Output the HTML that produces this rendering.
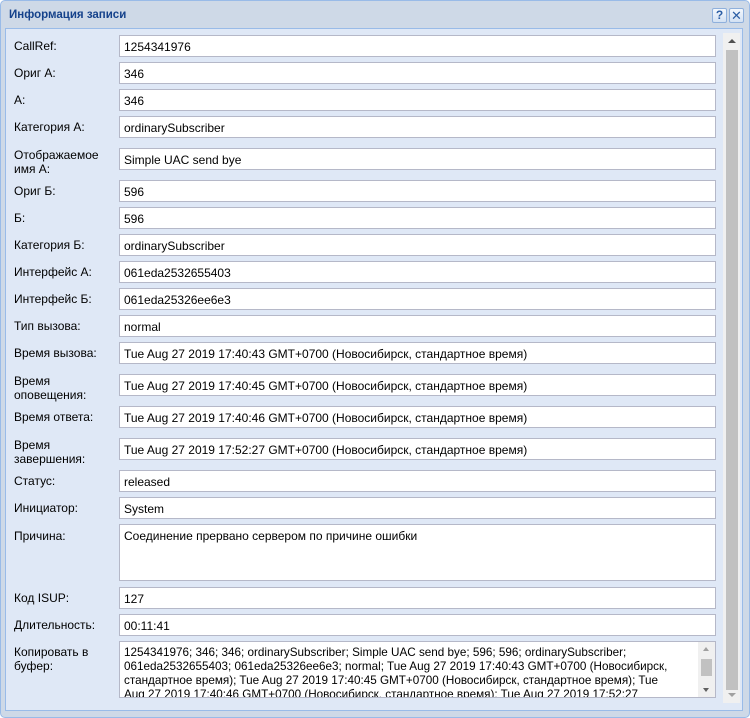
<!DOCTYPE html>
<html><head><meta charset="utf-8"><style>
*{margin:0;padding:0;box-sizing:border-box}
body{width:750px;height:718px;background:#fff;font-family:"Liberation Sans","DejaVu Sans",sans-serif;font-size:12px;color:#000;position:relative;overflow:hidden}
.win{position:absolute;left:0;top:0;width:750px;height:718px;background:#ced9e7;border:1px solid #99bbe8;border-radius:5px}
.title{position:absolute;left:8px;top:8px;font-weight:bold;color:#15428b;font-size:11.5px}
.tool{position:absolute;top:7px;width:15px;height:15px;border:1px solid #8fb0dc;border-radius:2px;background:linear-gradient(#f4f8fd,#d3e1f3);color:#2c5ea5;font-weight:bold;font-size:12px;text-align:center;line-height:13px}
.body{position:absolute;left:5px;top:28px;width:738px;height:683px;background:#dfe8f6;border:1px solid #99bbe8}
.l{position:absolute;left:14px;color:#000;line-height:14px}
.f{position:absolute;left:119px;width:597px;height:22px;background:#fff;border:1px solid #b5b8c8;padding:4px 4px 2px;line-height:14px;white-space:nowrap;overflow:hidden}
.sb{position:absolute;left:723px;top:33px;width:17px;height:670px;background:#f0f0f0}
.thumb{position:absolute;left:3px;top:17px;width:12px;height:640px;background:#c1c1c1}
</style></head><body>
<div class="win">
<div class="title">Информация записи</div>
<div class="tool" style="left:711px">?</div>
<div class="tool" style="left:728px;font-weight:normal;font-size:13px">✕</div>
</div>
<div class="body"></div>
<div class="l" style="top:39px">CallRef:</div><div class="f" style="top:35px">1254341976</div>
<div class="l" style="top:66px">Ориг А:</div><div class="f" style="top:62px">346</div>
<div class="l" style="top:93px">А:</div><div class="f" style="top:89px">346</div>
<div class="l" style="top:120px">Категория А:</div><div class="f" style="top:116px">ordinarySubscriber</div>
<div class="l" style="top:148px">Отображаемое<br>имя А:</div><div class="f" style="top:148px">Simple UAC send bye</div>
<div class="l" style="top:184px">Ориг Б:</div><div class="f" style="top:180px">596</div>
<div class="l" style="top:211px">Б:</div><div class="f" style="top:207px">596</div>
<div class="l" style="top:238px">Категория Б:</div><div class="f" style="top:234px">ordinarySubscriber</div>
<div class="l" style="top:265px">Интерфейс А:</div><div class="f" style="top:261px">061eda2532655403</div>
<div class="l" style="top:292px">Интерфейс Б:</div><div class="f" style="top:288px">061eda25326ee6e3</div>
<div class="l" style="top:319px">Тип вызова:</div><div class="f" style="top:315px">normal</div>
<div class="l" style="top:346px">Время вызова:</div><div class="f" style="top:342px">Tue Aug 27 2019 17:40:43 GMT+0700 (Новосибирск, стандартное время)</div>
<div class="l" style="top:374px">Время<br>оповещения:</div><div class="f" style="top:374px">Tue Aug 27 2019 17:40:45 GMT+0700 (Новосибирск, стандартное время)</div>
<div class="l" style="top:410px">Время ответа:</div><div class="f" style="top:406px">Tue Aug 27 2019 17:40:46 GMT+0700 (Новосибирск, стандартное время)</div>
<div class="l" style="top:438px">Время<br>завершения:</div><div class="f" style="top:438px">Tue Aug 27 2019 17:52:27 GMT+0700 (Новосибирск, стандартное время)</div>
<div class="l" style="top:474px">Статус:</div><div class="f" style="top:470px">released</div>
<div class="l" style="top:501px">Инициатор:</div><div class="f" style="top:497px">System</div>
<div class="l" style="top:529px">Причина:</div><div class="f" style="top:524px;height:57px">Соединение прервано сервером по причине ошибки</div>
<div class="l" style="top:591px">Код ISUP:</div><div class="f" style="top:587px">127</div>
<div class="l" style="top:618px">Длительность:</div><div class="f" style="top:614px">00:11:41</div>
<div class="l" style="top:645px">Копировать в<br>буфер:</div>
<div class="f" style="top:641px;height:57px;white-space:normal;padding-right:34px;font-size:11.7px">1254341976; 346; 346; ordinarySubscriber; Simple UAC send bye; 596; 596; ordinarySubscriber; 061eda2532655403; 061eda25326ee6e3; normal; Tue Aug 27 2019 17:40:43 GMT+0700 (Новосибирск, стандартное время); Tue Aug 27 2019 17:40:45 GMT+0700 (Новосибирск, стандартное время); Tue Aug 27 2019 17:40:46 GMT+0700 (Новосибирск, стандартное время); Tue Aug 27 2019 17:52:27
<div style="position:absolute;right:0;top:0;width:17px;height:55px;background:#f0f0f0"><div style="position:absolute;left:3px;top:17px;width:11px;height:17px;background:#c1c1c1"></div><div style="position:absolute;left:5px;top:5px;border:3px solid transparent;border-bottom:4px solid #a0a0a0;border-top:0"></div><div style="position:absolute;left:5px;top:46px;border:3px solid transparent;border-top:4px solid #606060;border-bottom:0"></div></div></div>
<div class="sb"><div style="position:absolute;left:5px;top:6px;border:4px solid transparent;border-bottom:4px solid #505050;border-top:0"></div><div class="thumb"></div><div style="position:absolute;left:5px;top:660px;border:4px solid transparent;border-top:4px solid #a0a0a0;border-bottom:0"></div></div>
</body></html>
